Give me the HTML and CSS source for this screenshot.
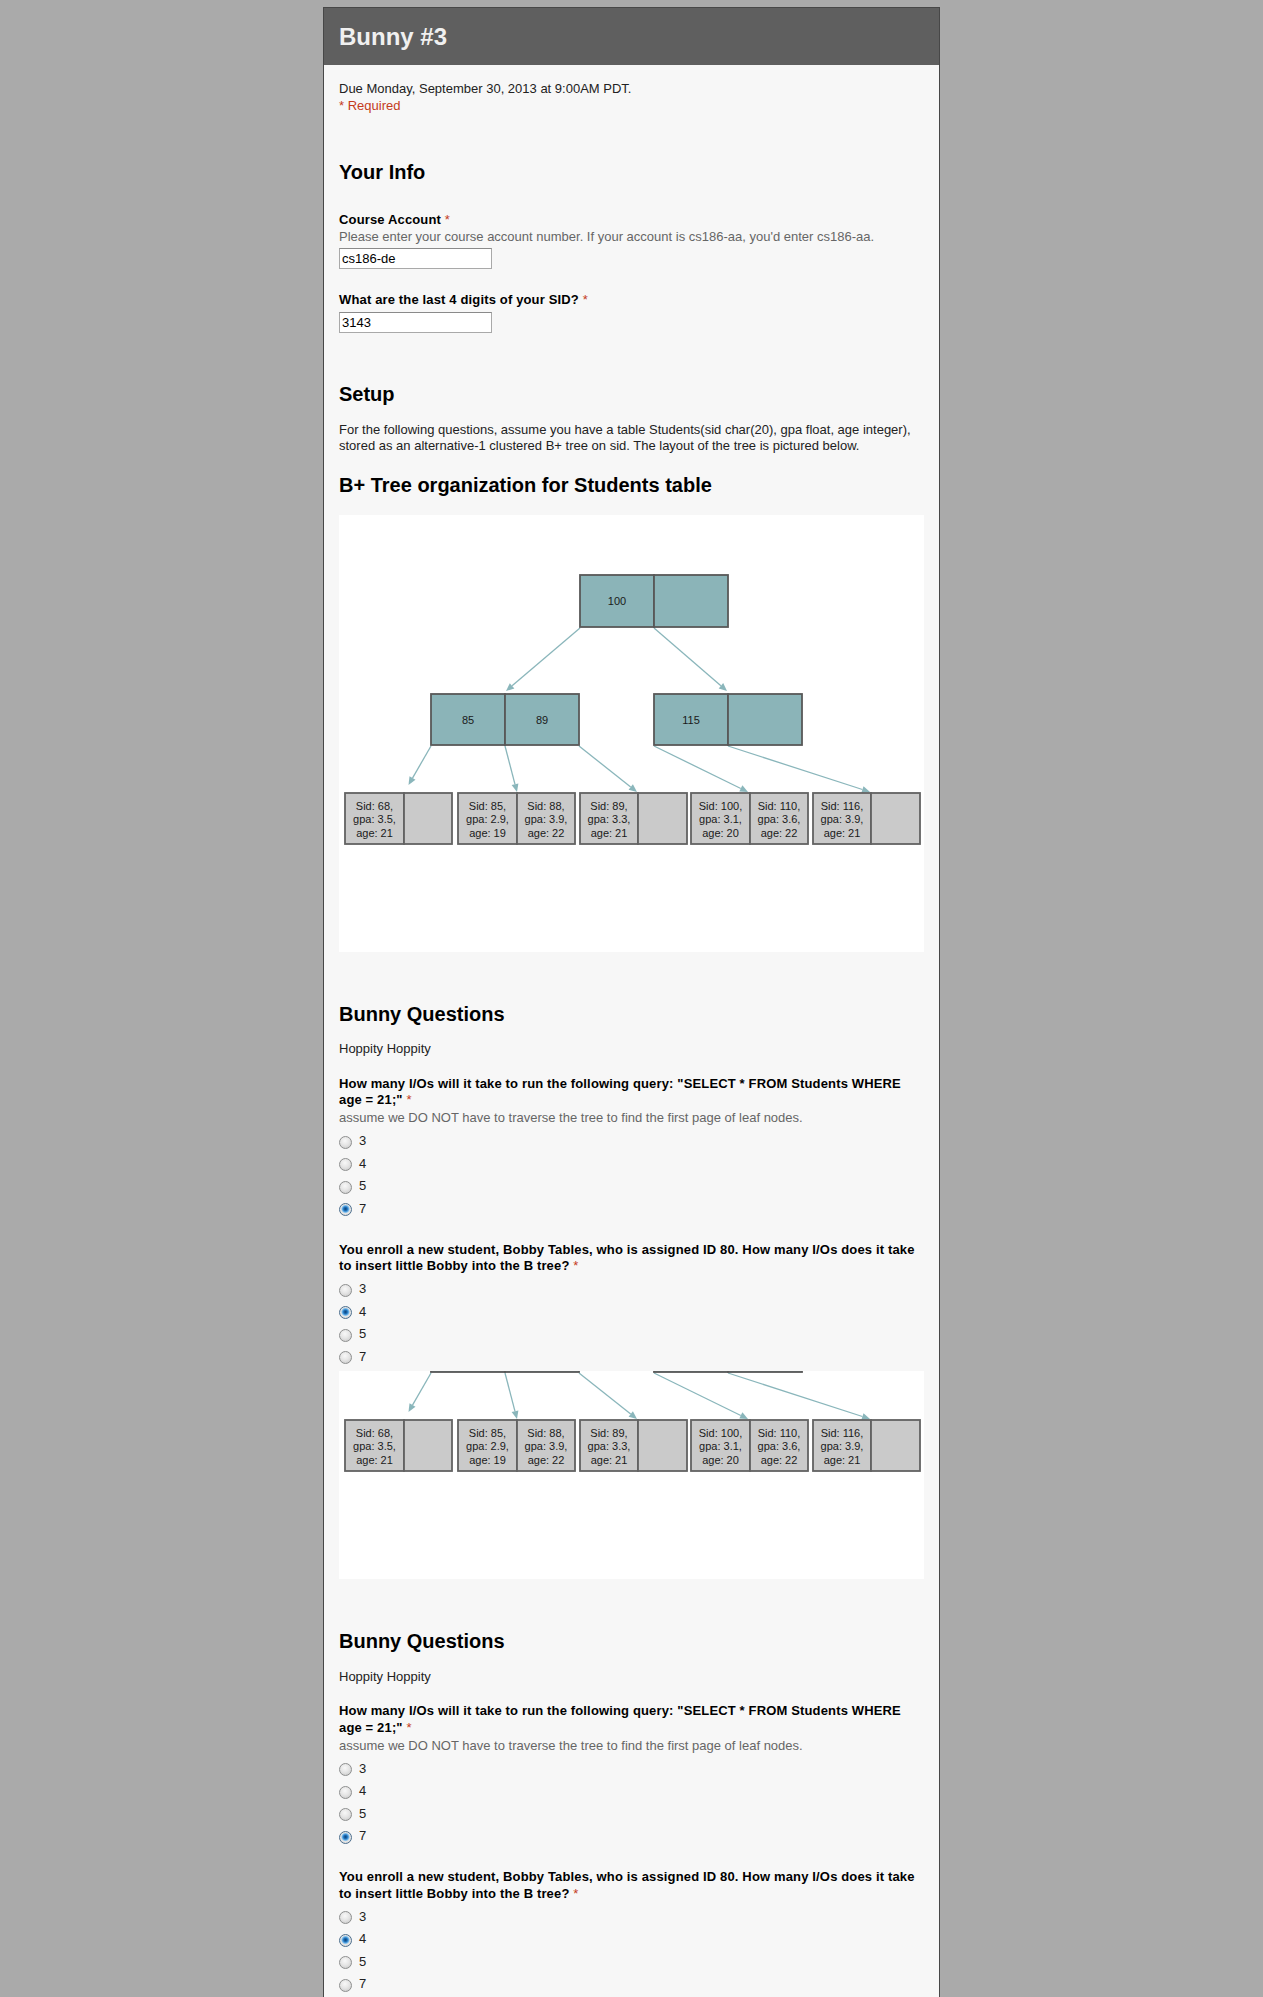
FILE: index.html
```html
<!DOCTYPE html>
<html lang="en">
<head>
<meta charset="utf-8">
<title>Bunny #3</title>
<link rel="stylesheet" href="styles.css">
</head>
<body>
<svg class="svg-defs" xmlns="http://www.w3.org/2000/svg" width="0" height="0">
  <defs>
    <symbol id="btree" viewBox="0 0 585 437">
      <g class="edges">
        <line x1="241" y1="113" x2="173.1" y2="170.8"/>
        <line x1="315" y1="113" x2="381.9" y2="170.8"/>
        <line x1="92" y1="231" x2="73.5" y2="263.1"/>
        <line x1="166" y1="231" x2="176" y2="269.3"/>
        <line x1="240" y1="231" x2="291.7" y2="272"/>
        <line x1="315" y1="231" x2="401.8" y2="273.5"/>
        <line x1="389" y1="231" x2="523.4" y2="274.5"/>
      </g>
      <g class="heads">
        <polygon points="167,176 170.8,168.2 175.4,173.5"/>
        <polygon points="388,176 379.7,173.4 384.2,168.1"/>
        <polygon points="69.5,270 70.5,261.3 76.5,264.8"/>
        <polygon points="178,277 172.6,270.1 179.4,268.4"/>
        <polygon points="298,277 289.6,274.8 293.9,269.3"/>
        <polygon points="409,277 400.3,276.6 403.4,270.3"/>
        <polygon points="531,277 522.3,277.9 524.5,271.2"/>
      </g>
      <g class="inner">
        <rect x="241" y="60" width="74" height="52"/>
        <rect x="315" y="60" width="74" height="52"/>
        <rect x="92" y="179" width="74" height="51"/>
        <rect x="166" y="179" width="74" height="51"/>
        <rect x="315" y="179" width="74" height="51"/>
        <rect x="389" y="179" width="74" height="51"/>
      </g>
      <g class="leaf">
        <rect x="6" y="278" width="59" height="51"/>
        <rect x="65" y="278" width="48" height="51"/>
        <rect x="119" y="278" width="59" height="51"/>
        <rect x="178" y="278" width="58" height="51"/>
        <rect x="241" y="278" width="58" height="51"/>
        <rect x="299" y="278" width="49" height="51"/>
        <rect x="352" y="278" width="59" height="51"/>
        <rect x="411" y="278" width="58" height="51"/>
        <rect x="474" y="278" width="58" height="51"/>
        <rect x="532" y="278" width="49" height="51"/>
      </g>
      <g class="labels">
        <text x="278" y="90">100</text>
        <text x="129" y="208.5">85</text>
        <text x="203" y="208.5">89</text>
        <text x="352" y="208.5">115</text>
        <text x="35.5" y="295">Sid: 68,</text>
        <text x="35.5" y="308.3">gpa: 3.5,</text>
        <text x="35.5" y="321.7">age: 21</text>
        <text x="148.5" y="295">Sid: 85,</text>
        <text x="148.5" y="308.3">gpa: 2.9,</text>
        <text x="148.5" y="321.7">age: 19</text>
        <text x="207" y="295">Sid: 88,</text>
        <text x="207" y="308.3">gpa: 3.9,</text>
        <text x="207" y="321.7">age: 22</text>
        <text x="270" y="295">Sid: 89,</text>
        <text x="270" y="308.3">gpa: 3.3,</text>
        <text x="270" y="321.7">age: 21</text>
        <text x="381.5" y="295">Sid: 100,</text>
        <text x="381.5" y="308.3">gpa: 3.1,</text>
        <text x="381.5" y="321.7">age: 20</text>
        <text x="440" y="295">Sid: 110,</text>
        <text x="440" y="308.3">gpa: 3.6,</text>
        <text x="440" y="321.7">age: 22</text>
        <text x="503" y="295">Sid: 116,</text>
        <text x="503" y="308.3">gpa: 3.9,</text>
        <text x="503" y="321.7">age: 21</text>
      </g>
    </symbol>
  </defs>
</svg>

<div class="form">
  <div class="form-header">
    <h1 class="form-title">Bunny #3</h1>
  </div>
  <div class="form-body">
    <div class="intro">
      <div>Due Monday, September 30, 2013 at 9:00AM PDT.</div>
      <div class="req-note">* Required</div>
    </div>

    <h2 class="section-title first">Your Info</h2>
    <div class="item item-first">
      <div class="q-title">Course Account <span class="req">*</span></div>
      <div class="q-help">Please enter your course account number. If your account is cs186-aa, you'd enter cs186-aa.</div>
      <input class="text-input" type="text" value="cs186-de">
    </div>
    <div class="item">
      <div class="q-title">What are the last 4 digits of your SID? <span class="req">*</span></div>
      <input class="text-input" type="text" value="3143">
    </div>

    <h2 class="section-title">Setup</h2>
    <div class="section-desc">For the following questions, assume you have a table Students(sid char(20), gpa float, age integer), stored as an alternative-1 clustered B+ tree on sid. The layout of the tree is pictured below.</div>
    <h2 class="image-title">B+ Tree organization for Students table</h2>
    <div class="tree-figure">
      <svg class="tree-svg" width="585" height="437" viewBox="0 0 585 437"><use href="#btree"/></svg>
    </div>

    <h2 class="section-title after-figure">Bunny Questions</h2>
    <div class="section-desc">Hoppity Hoppity</div>
    <div class="item item-radio item-after-desc">
      <div class="q-title">How many I/Os will it take to run the following query: "SELECT * FROM Students WHERE age = 21;" <span class="req">*</span></div>
      <div class="q-help">assume we DO NOT have to traverse the tree to find the first page of leaf nodes.</div>
      <div class="choices">
        <label class="choice"><input type="radio" name="q1a"><span>3</span></label>
        <label class="choice"><input type="radio" name="q1a"><span>4</span></label>
        <label class="choice"><input type="radio" name="q1a"><span>5</span></label>
        <label class="choice"><input type="radio" name="q1a" checked><span>7</span></label>
      </div>
    </div>
    <div class="item item-radio">
      <div class="q-title">You enroll a new student, Bobby Tables, who is assigned ID 80. How many I/Os does it take to insert little Bobby into the B tree? <span class="req">*</span></div>
      <div class="choices">
        <label class="choice"><input type="radio" name="q2a"><span>3</span></label>
        <label class="choice"><input type="radio" name="q2a" checked><span>4</span></label>
        <label class="choice"><input type="radio" name="q2a"><span>5</span></label>
        <label class="choice"><input type="radio" name="q2a"><span>7</span></label>
      </div>
    </div>
    <div class="tree-clip">
      <svg class="tree-svg tree-svg-shifted" width="585" height="437" viewBox="0 0 585 437"><use href="#btree"/></svg>
    </div>

    <h2 class="section-title after-figure">Bunny Questions</h2>
    <div class="section-desc">Hoppity Hoppity</div>
    <div class="item item-radio item-after-desc">
      <div class="q-title">How many I/Os will it take to run the following query: "SELECT * FROM Students WHERE age = 21;" <span class="req">*</span></div>
      <div class="q-help">assume we DO NOT have to traverse the tree to find the first page of leaf nodes.</div>
      <div class="choices">
        <label class="choice"><input type="radio" name="q1b"><span>3</span></label>
        <label class="choice"><input type="radio" name="q1b"><span>4</span></label>
        <label class="choice"><input type="radio" name="q1b"><span>5</span></label>
        <label class="choice"><input type="radio" name="q1b" checked><span>7</span></label>
      </div>
    </div>
    <div class="item item-radio">
      <div class="q-title">You enroll a new student, Bobby Tables, who is assigned ID 80. How many I/Os does it take to insert little Bobby into the B tree? <span class="req">*</span></div>
      <div class="choices">
        <label class="choice"><input type="radio" name="q2b"><span>3</span></label>
        <label class="choice"><input type="radio" name="q2b" checked><span>4</span></label>
        <label class="choice"><input type="radio" name="q2b"><span>5</span></label>
        <label class="choice"><input type="radio" name="q2b"><span>7</span></label>
      </div>
    </div>
  </div>
</div>
</body>
</html>
```

FILE: styles.css
```css
html, body {
  margin: 0;
  padding: 0;
}

body {
  background: #aaaaaa;
  font-family: "Liberation Sans", Arial, sans-serif;
  font-size: 13px;
  line-height: 16.5px;
  color: #222222;
}

.svg-defs {
  display: block;
  width: 0;
  height: 0;
  overflow: hidden;
}

.form {
  width: 615px;
  margin: 7px auto 0;
  border: 1px solid #474747;
  border-bottom: none;
  background: #f7f7f7;
}

.form-header {
  background: #5f5f5f;
  padding: 15px 15px 14px;
}

.form-title {
  margin: 0;
  font-size: 24px;
  line-height: 28px;
  font-weight: bold;
  color: #f0f0f0;
}

.form-body {
  padding: 16px 15px 60px;
}

.req-note,
.req {
  color: #c43b1d;
}

.section-title {
  margin: 49.5px 0 0;
  font-size: 20px;
  line-height: 24px;
  font-weight: bold;
  color: #000000;
}

.section-title.first {
  margin-top: 46px;
}

.section-title.after-figure {
  margin-top: 50px;
}

.section-desc {
  margin-top: 15.5px;
  color: #222222;
}

.image-title {
  margin: 18px 0 0;
  font-size: 20px;
  line-height: 24px;
  font-weight: bold;
  color: #000000;
}

.item {
  margin-top: 23px;
}

.item-first {
  margin-top: 28px;
}

.item-radio {
  margin-top: 21.5px;
}

.item-after-desc {
  margin-top: 18px;
}

.q-title {
  font-weight: bold;
  color: #000000;
  letter-spacing: 0.15px;
}

.item-radio .q-help {
  margin-top: 1.5px;
}

.q-title .req {
  font-weight: normal;
}

.q-help {
  color: #666666;
}

.text-input {
  display: block;
  box-sizing: border-box;
  width: 153px;
  height: 21px;
  margin: 3px 0 0;
  padding: 0 2px;
  border: 1px solid #a9a9a9;
  border-top-color: #8a8a8a;
  background: #ffffff;
  font-family: "Liberation Sans", Arial, sans-serif;
  font-size: 13px;
  color: #000000;
  outline: none;
}

.choices {
  margin-top: 3.5px;
}

.choice {
  display: flex;
  align-items: center;
  height: 22.5px;
  color: #222222;
}

.choice input {
  appearance: none;
  -webkit-appearance: none;
  box-sizing: border-box;
  width: 13px;
  height: 13px;
  margin: 2px 7px 0 0;
  border: 1px solid #8e8f8f;
  border-radius: 50%;
  background: radial-gradient(circle at 45% 35%, #f8f8f8 0, #e6e6e6 45%, #c4c4c4 100%);
  flex: none;
}

.choice input:checked {
  background: radial-gradient(circle at 50% 45%, #0b3f73 0, #1e6fb8 1.8px, #59a7e3 3px, #9fcdee 3.8px, #e2e2e2 4.4px, #e6e6e6 5px, #c4c4c4 100%);
  border-color: #4d6f8e;
}

.tree-figure {
  margin-top: 18px;
  width: 585px;
  height: 437px;
  background: #ffffff;
}

.tree-clip {
  margin-top: 3px;
  width: 585px;
  height: 208px;
  overflow: hidden;
  background: #ffffff;
}

.tree-svg {
  display: block;
}

.tree-svg-shifted {
  margin-top: -229px;
}

.edges line {
  stroke: #8ab6bb;
  stroke-width: 1.3;
}

.heads polygon {
  fill: #8ab6bb;
}

.inner rect {
  fill: #8bb4b8;
  stroke: #585858;
  stroke-width: 1.8;
}

.leaf rect {
  fill: #cacaca;
  stroke: #626262;
  stroke-width: 1.8;
}

.labels text {
  font-family: "Liberation Sans", Arial, sans-serif;
  font-size: 11px;
  fill: #1a1a1a;
  text-anchor: middle;
}
```
